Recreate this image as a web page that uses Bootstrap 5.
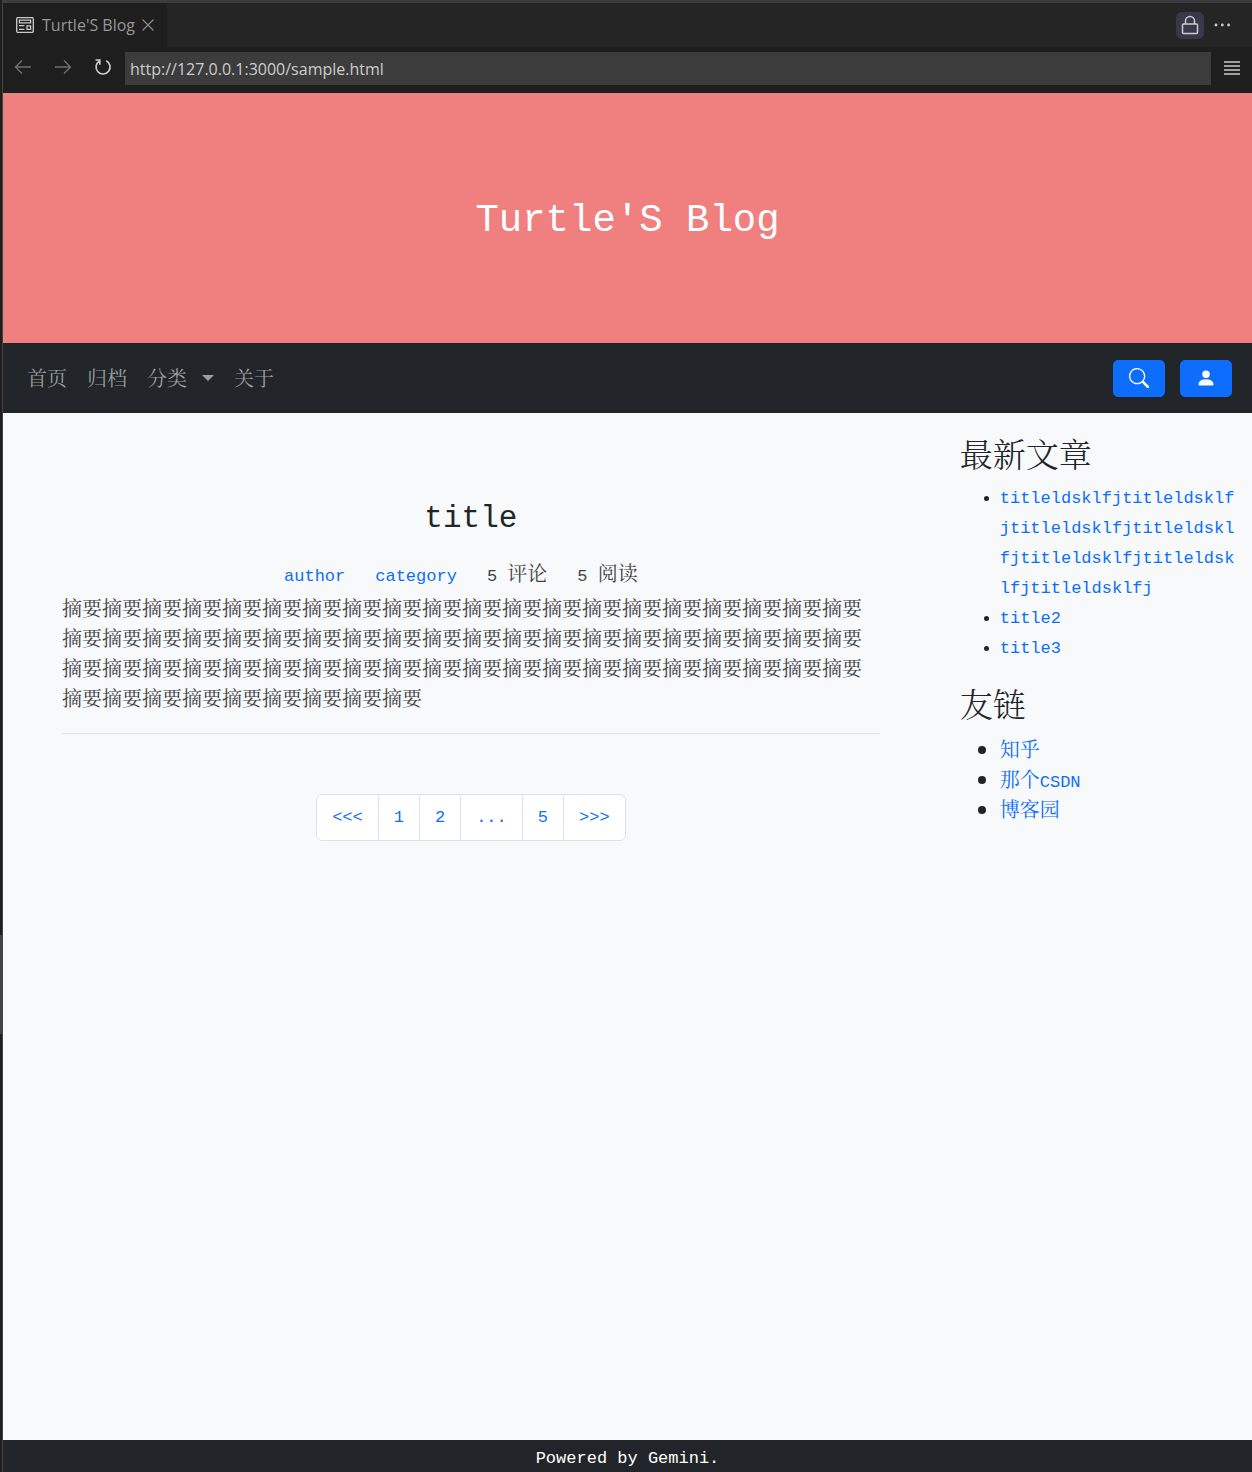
<!DOCTYPE html>
<html lang="zh-CN">
<head>
<meta charset="utf-8">
<meta name="viewport" content="width=device-width, initial-scale=1">
<title>Turtle'S Blog</title>
<link href="https://cdn.jsdelivr.net/npm/bootstrap@5.3.0/dist/css/bootstrap.min.css" rel="stylesheet">
<style>
body{font-family:"Noto Serif CJK SC","Noto Sans CJK SC",serif;font-size:20px;line-height:30px;background:#1e1e1e linear-gradient(#424242,#424242) 0 935px/2px 99px no-repeat}
a{text-decoration:none;color:#0d6efd}
.latin,.banner h1,.post-title,.page-link{font-family:"Liberation Mono",monospace}
.latin{font-size:17px}
span.latin{line-height:1}
.frame{border-top:3px solid #3c3c3c;border-left:1px solid #444;margin-left:2px}
.chrome{font-family:"Open Sans","Noto Sans",sans-serif;color:#ccc}
.tabstrip{height:44px;background:#252526}
.tab-item{background:#1e1e1e;width:164px;padding-left:13px;font-size:16px;color:#969696}
.addr-row{height:46px;padding:5px 0 8px}
.tools{width:122px;padding:0 2px 3px 0}
.tool{background:none;border:0;padding:0;color:#ccc;display:flex;align-items:center;justify-content:center}
.tool.dim{color:#6f6f6f}
.lock{width:28px;height:27px;border-radius:6px;background:#37384a}
.menu-btn{width:41px;padding-bottom:2px}
.addr{height:33px;background:#3c3c3c;border:0;color:#ccc;font-size:16px;padding:0 5px;min-width:0}
.banner{height:250px;padding-top:6px;background:#f08080}
.banner h1{font-size:39px;line-height:48px}
.topnav{height:70px;padding:0 20px 0 14px}
.topnav .nav-link{color:#9b9d9e;padding:0 10px}
.topnav .dropdown-toggle::after{margin-left:15px;vertical-align:5px;border-top-width:6px;border-left-width:6px;border-right-width:6px}
.nav-actions{gap:15px}
.nav-btn{width:52px;height:37px;padding:0;border-radius:5px;display:flex;align-items:center;justify-content:center}
.post-col{padding:81px 60px 0 59px}
.post-title{font-size:31px;line-height:50px;margin-bottom:14px}
.meta{gap:30px;height:30px;padding-right:20px;margin-bottom:5px}
.meta,.summary{color:#404346}
.summary{word-break:break-all}
.rule{border-top:1px solid #dee2e6;opacity:1;margin:20px 0 60px}
.pagination .page-link{font-size:17px;line-height:30px;padding:8px 15px 7px;border-color:#dee2e6;background:#fff}
.side-col{padding:20px 15px 0 20px}
.side-col h2{font-size:33px;line-height:40px;margin-bottom:11px}
.side-col ul{padding-left:40px;margin-bottom:19px}
.side-col li{word-break:break-all}
.foot{height:32px;padding-top:4px}
</style>
<script src="https://cdn.jsdelivr.net/npm/bootstrap@5.3.0/dist/js/bootstrap.bundle.min.js"></script>
</head>
<body>
<div class="frame d-flex flex-column min-vh-100">
  <div class="chrome">
    <div class="tabstrip d-flex">
      <div class="tab-item d-flex align-items-center">
        <svg width="18" height="16" viewBox="0 0 18 16" fill="none" stroke="#ccc" stroke-width="1.3"><rect x=".7" y=".7" width="16.6" height="14.6" rx="1"/><path d="M3.4 3.2h11.2v2.6H3.4zM11 8.8h3.6v3.6H11zM3 8.7h5.500M3 12.3h5.500"/></svg>
        <span class="ms-2">Turtle'S Blog</span>
        <button class="tool ms-1" aria-label="Close tab"><svg width="18" height="18" viewBox="0 0 18 18" fill="none" stroke="#888" stroke-width="1.3"><path d="M3.500 3.500l11 11M14.500 3.500l-11 11"/></svg></button>
      </div>
      <div class="ms-auto d-flex align-items-center gap-2 pe-3 me-1">
        <button class="tool lock" aria-label="Lock"><svg width="18" height="20" viewBox="0 0 18 20" fill="none" stroke="#ccc" stroke-width="1.5"><rect x="1.500" y="9" width="15" height="9.500" rx="1"/><path d="M4.500 9V6a4.500 4.500 0 0 1 9 0v3"/></svg></button>
        <button class="tool" aria-label="More"><svg width="20" height="4" viewBox="0 0 20 4" fill="#ccc"><circle cx="4" cy="2" r="1.400"/><circle cx="10.300" cy="2" r="1.400"/><circle cx="16.600" cy="2" r="1.400"/></svg></button>
      </div>
    </div>
    <div class="addr-row d-flex">
      <div class="tools d-flex align-items-center justify-content-around flex-shrink-0">
        <button class="tool dim" aria-label="Back"><svg width="18" height="16" viewBox="0 0 18 16" fill="none" stroke="currentColor" stroke-width="1.4"><path d="M17 8H1.500M8 1.500L1.500 8 8 14.500"/></svg></button>
        <button class="tool dim" aria-label="Forward"><svg width="18" height="16" viewBox="0 0 18 16" fill="none" stroke="currentColor" stroke-width="1.4"><path d="M1 8h15.500M10 1.500L16.500 8 10 14.500"/></svg></button>
        <button class="tool" aria-label="Reload"><svg width="18" height="18" viewBox="0 0 18 18" fill="none" stroke="currentColor" stroke-width="1.7"><path d="M12.300 2.800a7 7 0 1 1-7 .3M1.500 2h4.300v4.800"/></svg></button>
      </div>
      <input class="addr flex-grow-1" type="text" aria-label="Address" value="http://127.0.0.1:3000/sample.html">
      <button class="tool menu-btn" aria-label="Menu"><svg width="16" height="14" viewBox="0 0 16 14" stroke="#ccc" stroke-width="1.4"><path d="M0 1h16M0 5h16M0 9h16M0 13h16"/></svg></button>
    </div>
  </div>
  <header class="banner d-flex align-items-center justify-content-center text-white"><h1 class="m-0 fw-normal">Turtle'S Blog</h1></header>
  <nav class="topnav bg-dark d-flex align-items-center">
    <div class="nav flex-nowrap">
      <a class="nav-link" href="#">首页</a>
      <a class="nav-link" href="#">归档</a>
      <a class="nav-link dropdown-toggle" href="#" data-bs-toggle="dropdown">分类</a>
      <a class="nav-link" href="#">关于</a>
    </div>
    <div class="nav-actions ms-auto d-flex">
      <button class="btn btn-primary nav-btn" aria-label="Search"><svg width="20" height="20" viewBox="0 0 16 16" fill="currentColor"><path d="M11.742 10.344a6.500 6.500 0 1 0-1.397 1.398h-.001c.03.04.062.078.098.115l3.850 3.850a1 1 0 0 0 1.415-1.414l-3.850-3.850a1.007 1.007 0 0 0-.115-.1zM12 6.500a5.500 5.500 0 1 1-11 0 5.500 5.500 0 0 1 11 0z"/></svg></button>
      <button class="btn btn-primary nav-btn" aria-label="User"><svg width="20" height="20" viewBox="0 0 16 16" fill="currentColor"><path d="M3 14s-1 0-1-1 1-4 6-4 6 3 6 4-1 1-1 1H3zm5-6a3 3 0 1 0 0-6 3 3 0 0 0 0 6z"/></svg></button>
    </div>
  </nav>
  <div class="row g-0 bg-light flex-grow-1">
    <main class="col-9 post-col">
      <h2 class="post-title fw-normal text-center">title</h2>
      <div class="meta d-flex justify-content-center align-items-baseline">
        <a class="latin" href="#">author</a><a class="latin" href="#">category</a>
        <span><span class="latin">5 </span>评论</span><span><span class="latin">5 </span>阅读</span>
      </div>
      <p class="summary mb-0">摘要摘要摘要摘要摘要摘要摘要摘要摘要摘要摘要摘要摘要摘要摘要摘要摘要摘要摘要摘要摘要摘要摘要摘要摘要摘要摘要摘要摘要摘要摘要摘要摘要摘要摘要摘要摘要摘要摘要摘要摘要摘要摘要摘要摘要摘要摘要摘要摘要摘要摘要摘要摘要摘要摘要摘要摘要摘要摘要摘要摘要摘要摘要摘要摘要摘要摘要摘要摘要</p>
      <hr class="rule">
      <nav aria-label="Pages"><ul class="pagination justify-content-center">
        <li class="page-item"><a class="page-link" href="#">&lt;&lt;&lt;</a></li>
        <li class="page-item"><a class="page-link" href="#">1</a></li>
        <li class="page-item"><a class="page-link" href="#">2</a></li>
        <li class="page-item"><a class="page-link" href="#">...</a></li>
        <li class="page-item"><a class="page-link" href="#">5</a></li>
        <li class="page-item"><a class="page-link" href="#">&gt;&gt;&gt;</a></li>
      </ul></nav>
    </main>
    <aside class="col-3 side-col">
      <h2 class="fw-light">最新文章</h2>
      <ul class="latin">
        <li><a href="#">titleldsklfjtitleldsklfjtitleldsklfjtitleldsklfjtitleldsklfjtitleldsklfjtitleldsklfj</a></li>
        <li><a href="#">title2</a></li>
        <li><a href="#">title3</a></li>
      </ul>
      <h2 class="fw-light">友链</h2>
      <ul>
        <li><a href="#">知乎</a></li>
        <li><a href="#">那个<span class="latin">CSDN</span></a></li>
        <li><a href="#">博客园</a></li>
      </ul>
    </aside>
  </div>
  <footer class="foot bg-dark text-white text-center latin">Powered by Gemini.</footer>
</div>
</body>
</html>
